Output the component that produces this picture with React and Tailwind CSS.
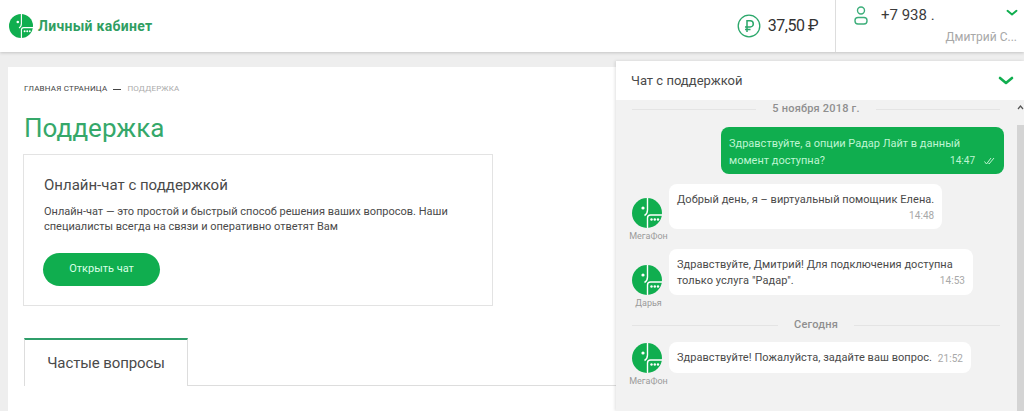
import React from "react";

const Logo = ({ size = 30 }) => (
  <svg width={size} height={size} viewBox="0 0 30 30" className="shrink-0">
    <circle cx="15" cy="15" r="15" fill="#10ae4f" />
    <path d="M15.5 0V12C15.5 15 14.5 16.5 12.5 17.5" fill="none" stroke="#fff" strokeWidth="1.4" />
    <path d="M15.5 30V20C15.5 18 16.5 17 18.5 17H30" fill="none" stroke="#fff" strokeWidth="1.4" />
    <circle cx="11" cy="10" r="1.6" fill="#fff" />
    <circle cx="19.5" cy="21.5" r="1.2" fill="#fff" />
    <circle cx="22.8" cy="21.5" r="1.2" fill="#fff" />
    <circle cx="26" cy="21.5" r="1.2" fill="#fff" />
  </svg>
);

const Chevron = ({ className }) => (
  <svg width="16" height="10" viewBox="0 0 16 10" className={className}>
    <path d="M2 2l6 5 6-5" fill="none" stroke="#10ae4f" strokeWidth="2.6" strokeLinecap="round" strokeLinejoin="round" />
  </svg>
);

const DateLine = ({ children, className }) => (
  <div className={`flex items-center gap-4 pl-4 pr-6 ${className}`}>
    <div className="h-px flex-1 bg-[#e4e4e4]" />
    <span className="text-[11px] font-medium leading-4 tracking-[0.2px] text-[#8f8f8f]">{children}</span>
    <div className="h-px flex-1 bg-[#e4e4e4]" />
  </div>
);

const Incoming = ({ who, logoClass, children, className }) => (
  <div className={`flex items-start pl-3 ${className}`}>
    <div className="flex w-[41px] shrink-0 flex-col items-center">
      <div className={`mr-1 ${logoClass}`}><Logo /></div>
      <span className="mt-[2px] text-[9px] leading-3 whitespace-nowrap text-[#9a9a9a]">{who}</span>
    </div>
    {children}
  </div>
);

export default function App() {
  return (
    <div className="relative h-[411px] w-[1024px] overflow-hidden bg-[#eeeeee] font-['Roboto',sans-serif] text-[#4a4a4a]">
      {/* header */}
      <header className="flex h-[52px] items-stretch bg-white shadow-[0_1px_3px_rgba(0,0,0,0.18)]">
        <div className="flex items-center gap-[5px] pl-[9px]">
          <Logo size={24} />
          <span className="text-sm font-bold tracking-[0.3px] text-[#2f9e62]">Личный кабинет</span>
        </div>
        <div className="ml-auto flex items-center pr-[17px]">
          <svg width="24" height="24" viewBox="0 0 24 24" className="mr-[7px]">
            <circle cx="12" cy="12" r="10.8" fill="none" stroke="#2aa76a" strokeWidth="1.3" />
            <path d="M10 18V6.8h3.2a3 3 0 010 6.2H8M8 15.4h5.5" fill="none" stroke="#2aa76a" strokeWidth="1.5" />
          </svg>
          <span className="text-base tracking-[-0.5px] text-[#333333]">37,50 ₽</span>
        </div>
        <div className="relative w-[189px] border-l border-[#dddddd] pl-[18px] pt-[5px]">
          <div className="flex items-center">
            <svg width="14" height="19" viewBox="0 0 14 19" className="mr-[13px]">
              <circle cx="7" cy="4.5" r="3.5" fill="none" stroke="#3cae7a" strokeWidth="1.4" />
              <rect x="1" y="11.5" width="12" height="6.5" rx="3" fill="none" stroke="#3cae7a" strokeWidth="1.4" />
            </svg>
            <span className="text-[15px] leading-5 text-[#3b3b3b]">+7 938 .</span>
            <Chevron className="absolute right-[4px] top-[8px] scale-75" />
          </div>
          <div className="mt-1 pr-[7px] text-right text-xs leading-4 text-[#a8a8a8]">Дмитрий С...</div>
        </div>
      </header>

      {/* main */}
      <main className="mx-2 mt-[15px] h-[344px] bg-white pl-[15px] pt-[18px]">
        <div className="flex items-center pl-px text-[8px] leading-2 tracking-[0.2px] uppercase">
          <span className="text-[#444444]">Главная страница</span>
          <span className="mx-[6px] h-px w-2 bg-[#444444]" />
          <span className="text-[#aaaaaa]">Поддержка</span>
        </div>
        <h1 className="mt-[19px] pl-px text-[26px] leading-8 text-[#35a86a]">Поддержка</h1>
        <section className="mt-[10px] h-[152px] w-[470px] border border-[#e3e3e3] pl-5 pt-5">
          <h2 className="text-[15px] leading-5">Онлайн-чат с поддержкой</h2>
          <p className="mt-[9px] w-[420px] text-[11px] leading-[15px]">
            Онлайн-чат — это простой и быстрый способ решения ваших вопросов. Наши специалисты всегда на связи и оперативно ответят Вам
          </p>
          <button className="-ml-px mt-[19px] flex h-[33px] w-[117px] items-center justify-center rounded-full bg-[#10ae4f] text-[11px] text-[#d9ffe6]">
            Открыть чат
          </button>
        </section>
        <div className="ml-px mt-8 flex w-[600px] items-end border-b border-[#dddddd]">
          <div className="-mb-px flex h-[48px] w-[164px] items-center justify-center border-x border-t-2 border-[#dddddd] border-t-[#2f9e6a] bg-white text-[15px] tracking-[-0.1px]">
            Частые вопросы
          </div>
        </div>
      </main>

      {/* chat widget */}
      <aside className="absolute top-[61px] left-[616px] h-[350px] w-[408px] bg-[#f2f2f2] shadow-[-1px_0_3px_rgba(0,0,0,0.12)]">
        <div className="flex h-[39px] items-center justify-between bg-white pr-[10px] pl-[15px]">
          <span className="text-[13px]">Чат с поддержкой</span>
          <Chevron />
        </div>
        <svg width="7" height="6" viewBox="0 0 7 6" className="absolute top-[43px] right-0">
          <path d="M1 5l2.5-3L6 5" fill="none" stroke="#555555" strokeWidth="1.2" />
        </svg>
        <div className="absolute top-[64px] right-0 bottom-0 w-[7px] bg-[#d4d4d4]" />
        <DateLine className="mt-px">5 ноября 2018 г.</DateLine>
        <div className="mt-[10px] mr-5 ml-auto w-[283px] rounded-lg bg-[#10ae4f] px-2 pt-2 pb-[5px] text-[11px] leading-[17px] text-[#bff5d2]">
          <div>Здравствуйте, а опции Радар Лайт в данный</div>
          <div className="flex items-center">
            <span>момент доступна?</span>
            <span className="ml-auto text-[10px]">14:47</span>
            <svg width="11" height="8" viewBox="0 0 11 8" className="ml-[9px] mr-px">
              <path d="M0.5 4.5l2 2.5L7 1M4.5 6.5L5 7l5-6" fill="none" stroke="#bff5d2" strokeWidth="1" />
            </svg>
          </div>
        </div>
        <Incoming who="МегаФон" logoClass="mt-[14px]" className="mt-[10px]">
          <div className="rounded-lg bg-white px-2 pt-2 pb-[5px] text-[11px] leading-4 tracking-[0.05px]">
            <div>Добрый день, я – виртуальный помощник Елена.</div>
            <div className="text-right text-[10px] text-[#a8a8a8]">14:48</div>
          </div>
        </Incoming>
        <Incoming who="Дарья" logoClass="mt-4" className="mt-[7px]">
          <div className="h-[46px] w-[304px] rounded-lg bg-white px-2 pt-2 text-[11px] leading-4 tracking-[0.05px]">
            <div>Здравствуйте, Дмитрий! Для подключения доступна</div>
            <div className="flex justify-between">
              <span>только услуга "Радар".</span>
              <span className="text-[10px] text-[#a8a8a8]">14:53</span>
            </div>
          </div>
        </Incoming>
        <DateLine className="mt-2">Сегодня</DateLine>
        <Incoming who="МегаФон" logoClass="mt-px" className="mt-[9px]">
          <div className="flex h-[31px] w-[302px] items-center justify-between rounded-lg bg-white px-2 pt-px text-[11px] tracking-[0.05px]">
            <span>Здравствуйте! Пожалуйста, задайте ваш вопрос.</span>
            <span className="text-[10px] text-[#a8a8a8]">21:52</span>
          </div>
        </Incoming>
      </aside>
    </div>
  );
}
